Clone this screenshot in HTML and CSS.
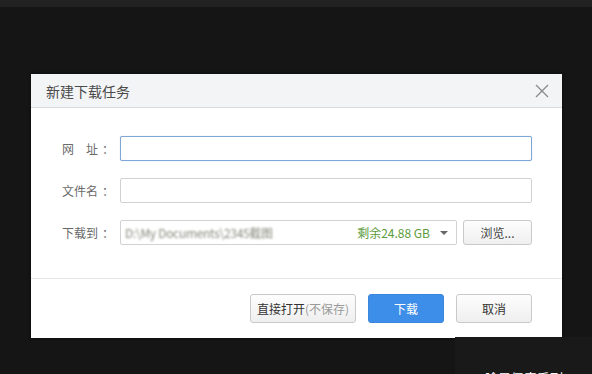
FILE: index.html
```html
<!DOCTYPE html>
<html lang="zh-CN">
<head>
    <meta charset="UTF-8">
    <title>新建下载任务</title>
    <link rel="stylesheet" href="styles.css">
</head>
<body>

<div class="topbar"></div>

<div class="dialog">
    <div class="dialog-title">
        <span>新建下载任务</span>
        <svg class="close" width="14" height="14" viewBox="0 0 14 14">
            <path d="M1 1 L13 13 M13 1 L1 13" stroke="#8a8a8a" stroke-width="1.3" fill="none"/>
        </svg>
    </div>

    <div class="dialog-body">
        <div class="row">
            <label class="label"><span>网</span><span class="gap">址</span><span class="colon">：</span></label>
            <input type="text" class="field focused">
        </div>
        <div class="row">
            <label class="label">文件名<span class="colon">：</span></label>
            <input type="text" class="field">
        </div>
        <div class="row">
            <label class="label">下载到<span class="colon">：</span></label>
            <div class="select">
                <span class="path">D:\My Documents\2345截图</span>
                <span class="free">剩余24.88 GB</span>
                <span class="arrow"></span>
            </div>
            <button type="button" class="btn browse">浏览...</button>
        </div>
    </div>

    <div class="dialog-footer">
        <button type="button" class="btn open">直接打开<span class="muted">(不保存)</span></button>
        <button type="button" class="btn primary">下载</button>
        <button type="button" class="btn cancel">取消</button>
    </div>
</div>

<div class="corner">
    <span>啥是佩奇系列</span>
</div>

</body>
</html>
```

FILE: styles.css
```css
body {
    margin: 0;
    padding: 0;
    width: 592px;
    height: 374px;
    overflow: hidden;
    background: #151515;
    font-family: "Noto Sans CJK SC", "Noto Sans", sans-serif;
    position: relative;
}

.topbar {
    height: 7px;
    background: #222222;
}

.dialog {
    width: 531px;
    margin: 67px 0 0 31px;
    background: #fff;
    box-shadow: 0 0 3px rgba(0, 0, 0, 0.6);
}

.dialog-title {
    height: 33px;
    background: #f3f4f6;
    border-bottom: 1px solid #d9dadc;
    display: flex;
    align-items: center;
    justify-content: space-between;
    padding: 0 13px 0 15px;
    font-size: 14px;
    color: #4a4a4a;
}

.close {
    display: block;
}

.dialog-body {
    padding: 28px 30px 33px 31px;
    border-bottom: 1px solid #e6e6e6;
    display: flex;
    flex-direction: column;
    gap: 17px;
}

.row {
    display: flex;
    align-items: center;
    height: 25px;
}

.label {
    width: 58px;
    font-size: 12px;
    color: #6a6a6a;
    display: flex;
}

.label .gap {
    margin-left: 12px;
}

.label .colon {
    margin-left: 4px;
}

.field {
    flex: 1;
    height: 25px;
    box-sizing: border-box;
    border: 1px solid #d2d2d2;
    border-radius: 2px;
    padding: 0 6px;
    outline: none;
}

.field.focused {
    border-color: #7ea6d6;
    box-shadow: 0 0 1px #a9c6e8;
}

.select {
    width: 337px;
    height: 25px;
    box-sizing: border-box;
    border: 1px solid #d2d2d2;
    border-radius: 2px;
    display: flex;
    align-items: center;
    padding: 0 6px 0 4px;
    font-size: 12px;
}

.path {
    display: inline-block;
    flex: 1;
    color: #8a8a7e;
    filter: blur(0.8px);
    letter-spacing: -0.3px;
}

.free {
    color: #5b9b3c;
}

.arrow {
    margin-left: 10px;
    width: 0;
    height: 0;
    border-left: 4px solid transparent;
    border-right: 4px solid transparent;
    border-top: 4px solid #666;
    margin-right: 2px;
}

.btn {
    height: 29px;
    box-sizing: border-box;
    border: 1px solid #c9c9c9;
    border-radius: 3px;
    background: linear-gradient(#fdfdfd, #efefef);
    font-family: inherit;
    font-size: 12px;
    color: #333;
    padding: 0;
    cursor: pointer;
}

.browse {
    width: 69px;
    height: 25px;
    margin-left: 6px;
    color: #444;
}

.dialog-footer {
    display: flex;
    justify-content: flex-end;
    gap: 12px;
    padding: 15px 30px 15px 0;
}

.open {
    width: 106px;
}

.muted {
    color: #9a9a9a;
}

.primary {
    width: 76px;
    background: #3c8ee9;
    border-color: #3a86dc;
    color: #fff;
}

.cancel {
    width: 76px;
}

.corner {
    position: absolute;
    right: 0;
    bottom: 0;
    width: 137px;
    height: 37px;
    background: #191919;
    overflow: hidden;
}

.corner span {
    position: absolute;
    left: 30px;
    top: 31px;
    font-size: 13px;
    color: #fff;
    white-space: nowrap;
}
```
